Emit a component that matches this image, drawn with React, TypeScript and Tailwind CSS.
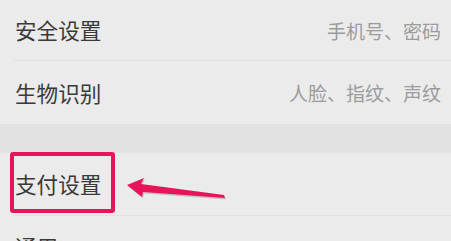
import React from 'react';

const font = { fontFamily: '"Noto Sans CJK SC", "Noto Sans", sans-serif' };

function Row({ title, hint, className = '' }: { title: string; hint?: string; className?: string }) {
  return (
    <div className={`flex items-center justify-between pl-[15px] pr-[10px] ${className}`}>
      <span className="text-[21.6px] leading-none text-[#3a3a3a]">{title}</span>
      {hint && <span className="text-[19px] leading-none text-[#9c9c9c]">{hint}</span>}
    </div>
  );
}

export default function App() {
  return (
    <div className="h-[241px] w-[451px] overflow-hidden bg-[#ebebeb]" style={font}>
      <Row title="安全设置" hint="手机号、密码" className="h-[60px]" />
      <div className="ml-[14px] h-px bg-[#e0e0e0]" />
      <Row title="生物识别" hint="人脸、指纹、声纹" className="h-[63px]" />
      <div className="h-[29px] bg-[#e2e2e2]" />

      {/* highlighted row */}
      <div className="relative">
        <Row title="支付设置" className="h-[62px]" />
        <div className="absolute left-[10px] top-[-1px] h-[61px] w-[105px] rounded-[3px] border-[4px] border-[#e8145a]" />
        <svg className="absolute inset-0" width="451" height="62" viewBox="0 0 451 62">
          <polygon
            points="127,32 144,25 141,31 224,42 225,45 143,39 142,44"
            fill="#7a7a7a"
            opacity="0.35"
            transform="translate(1,1.5)"
          />
          <polygon points="127,32 144,25 141,31 224,42 225,45 143,39 142,44" fill="#e8145a" />
        </svg>
      </div>

      <div className="ml-[14px] h-px bg-[#e0e0e0]" />
      <Row title="通用" className="h-[62px]" />
    </div>
  );
}
